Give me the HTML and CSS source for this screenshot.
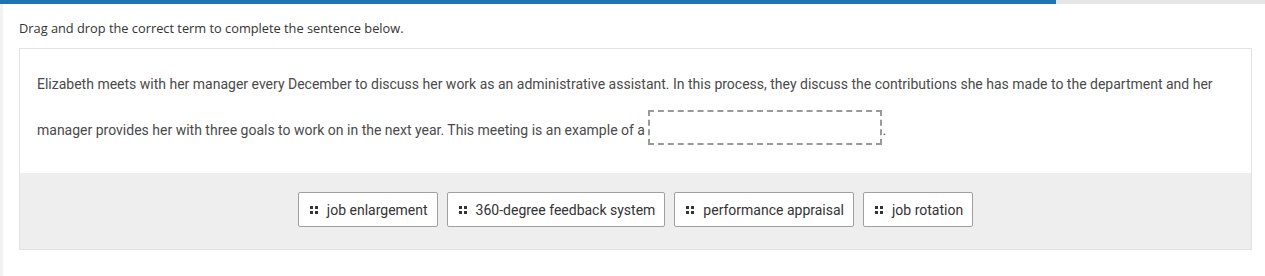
FILE: index.html
```html
<!DOCTYPE html>
<html lang="en">
<head>
  <meta charset="UTF-8" />
  <meta name="viewport" content="width=device-width, initial-scale=1.0"/>
  <title>Drag and drop</title>
  <link rel="stylesheet" href="styles.css">
</head>
<body>
  <div class="progress"><div class="progress-fill" style="width: 83.5%"></div></div>
  <div class="page">
    <p class="prompt">Drag and drop the correct term to complete the sentence below.</p>
    <div class="card">
      <div class="sentence">
        Elizabeth meets with her manager every December to discuss her work as an administrative assistant. In this process, they discuss the contributions she has made to the department and her manager provides her with three goals to work on in the next year. This meeting is an example of a <span class="drop-zone"></span>.
      </div>
      <div class="choices">
        <div class="choice"><span class="grip"><i></i><i></i><i></i><i></i></span>job enlargement</div>
        <div class="choice"><span class="grip"><i></i><i></i><i></i><i></i></span>360-degree feedback system</div>
        <div class="choice"><span class="grip"><i></i><i></i><i></i><i></i></span>performance appraisal</div>
        <div class="choice"><span class="grip"><i></i><i></i><i></i><i></i></span>job rotation</div>
      </div>
    </div>
  </div>
</body>
</html>
```
FILE: styles.css
```css
body {
  margin: 0;
  padding: 0;
  background-color: white;
  font-family: Roboto, "Liberation Sans", sans-serif;
}
.progress {
  height: 4px;
  background-color: #e6e6e6;
}
.progress-fill {
  height: 100%;
  background-color: #1b75b3;
}
.page {
  border-left: 3px solid #f2f2f2;
  padding: 16px 13px 30px 16px;
}
.prompt {
  margin: 0 0 11px;
  font-family: "Open Sans", "Liberation Sans", sans-serif;
  font-size: 12.8px;
  line-height: 17px;
  color: #333;
}
.card {
  border: 1px solid #e3e3e3;
  background-color: white;
}
.sentence {
  padding: 12px 17px 20px 17px;
  font-size: 14px;
  line-height: 46px;
  color: #4a4a4a;
}
.drop-zone {
  display: inline-block;
  box-sizing: border-box;
  width: 234px;
  height: 35px;
  border: 2px dashed #999;
  vertical-align: -10px;
}
.choices {
  display: flex;
  justify-content: center;
  gap: 9px;
  padding: 19px 0 22px;
  background-color: #eeeeee;
}
.choice {
  display: flex;
  align-items: center;
  gap: 9px;
  box-sizing: border-box;
  height: 35px;
  padding: 0 9px 0 11px;
  border: 1px solid #a0a0a0;
  border-radius: 2px;
  background-color: white;
  font-size: 14px;
  color: #333;
}
.grip {
  display: grid;
  grid-template-columns: 3px 3px;
  gap: 2px;
}
.grip i {
  width: 3px;
  height: 3px;
  background-color: #333;
}
```
